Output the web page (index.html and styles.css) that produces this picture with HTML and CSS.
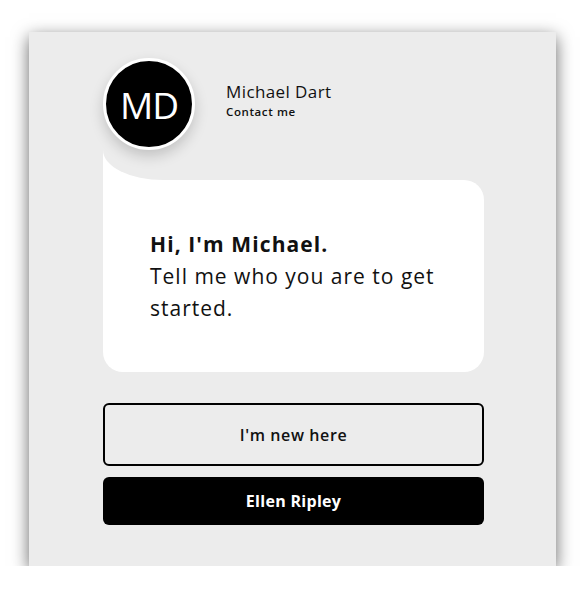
FILE: index.html
```html
<!DOCTYPE html>
<html lang="en">
<head>
    <meta charset="UTF-8">
    <meta name="viewport" content="width=device-width, initial-scale=1.0">
    <title>Michael Dart - Chat</title>
    <link rel="stylesheet" href="styles.css">
</head>
<body>
    <div class="panel">
        <div class="header">
            <div class="avatar">MD</div>
            <div class="who">
                <div class="name">Michael Dart</div>
                <div class="contact">Contact me</div>
            </div>
        </div>

        <div class="bubble">
            <p><strong>Hi, I'm Michael.</strong><br>Tell me who you are to get started.</p>
        </div>

        <div class="actions">
            <button class="btn btn-outline">I'm new here</button>
            <button class="btn btn-dark">Ellen Ripley</button>
        </div>
    </div>
</body>
</html>
```

FILE: styles.css
```css
body {
    font-family: 'Open Sans', sans-serif;
    margin: 0;
    padding: 0;
    background-color: #ffffff;
    color: #111;
}
.panel {
    width: 527px;
    height: 534px;
    margin: 32px 0 0 29px;
    padding: 26px 72px 0 74px;
    box-sizing: border-box;
    background: #ececec;
    box-shadow: 0 5px 16px rgba(0, 0, 0, 0.6);
}
.header {
    display: flex;
    align-items: center;
    gap: 31px;
}
.avatar {
    position: relative;
    z-index: 2;
    width: 86px;
    height: 86px;
    border-radius: 50%;
    border: 3px solid #fff;
    background: #000;
    color: #fff;
    display: flex;
    align-items: center;
    justify-content: center;
    font-size: 37px;
    letter-spacing: -1px;
    box-shadow: 0 6px 14px rgba(0, 0, 0, 0.18);
}
.who {
    padding-bottom: 6px;
}
.name {
    font-size: 17px;
    line-height: 22px;
    letter-spacing: 0.4px;
}
.contact {
    font-size: 11.5px;
    font-weight: 600;
    line-height: 18px;
    letter-spacing: 0.6px;
}
.bubble {
    position: relative;
    margin-top: 30px;
    height: 192px;
    background: #fff;
    border-radius: 0 20px 20px 20px;
    padding: 0 20px 0 47px;
    display: flex;
    align-items: center;
}
.bubble::before,
.bubble::after {
    content: '';
    position: absolute;
    left: 0;
    top: -30px;
    width: 60px;
    height: 30px;
}
.bubble::before {
    background: #fff;
}
.bubble::after {
    background: #ececec;
    border-bottom-left-radius: 60px 30px;
}
.bubble p {
    margin: 0;
    font-size: 21px;
    line-height: 32px;
    letter-spacing: 1px;
}
.bubble strong {
    font-size: 21px;
    font-weight: 700;
    letter-spacing: 1.1px;
}
.actions {
    margin-top: 31px;
    display: flex;
    flex-direction: column;
    gap: 11px;
}
.btn {
    width: 100%;
    border-radius: 6px;
    font-family: inherit;
    font-size: 16px;
    font-weight: 600;
    letter-spacing: 0.6px;
    cursor: pointer;
}
.btn-outline {
    height: 63px;
    background: transparent;
    border: 2px solid #000;
    color: #111;
}
.btn-dark {
    height: 48px;
    background: #000;
    border: none;
    color: #fff;
    font-size: 16px;
    font-weight: 700;
    letter-spacing: 0.3px;
}
```
